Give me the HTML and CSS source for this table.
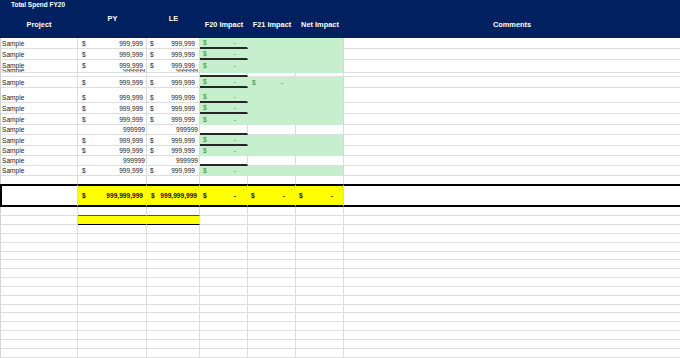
FILE: index.html
```html
<!DOCTYPE html>
<html>
<head>
<meta charset="utf-8">
<link rel="stylesheet" href="styles.css">
</head>
<body>
<div class="sheet">
  <div class="head">
    <div class="title">Total Spend FY20</div>
    <div class="hrow">
      <div class="h">Project</div>
      <div class="h top">PY</div>
      <div class="h top">LE</div>
      <div class="h">F20 Impact</div>
      <div class="h">F21 Impact</div>
      <div class="h">Net Impact</div>
      <div class="h">Comments</div>
    </div>
  </div>

  <div class="row h11">
    <div class="c name">Sample</div>
    <div class="c py"><span>$</span><span>999,999</span></div>
    <div class="c le"><span>$</span><span>999,999</span></div>
    <div class="c g f20 ul"><span>$</span><span>-</span></div>
    <div class="c g"></div>
    <div class="c g net"></div>
    <div class="c"></div>
  </div>
  <div class="row h11">
    <div class="c name">Sample</div>
    <div class="c py"><span>$</span><span>999,999</span></div>
    <div class="c le"><span>$</span><span>999,999</span></div>
    <div class="c g f20 ul"><span>$</span><span>-</span></div>
    <div class="c g"></div>
    <div class="c g net"></div>
    <div class="c"></div>
  </div>
  <div class="row h9 nob low">
    <div class="c name">Sample</div>
    <div class="c py"><span>$</span><span>999,999</span></div>
    <div class="c le"><span>$</span><span>999,999</span></div>
    <div class="c g f20"><span>$</span><span>-</span></div>
    <div class="c g"></div>
    <div class="c g net"></div>
    <div class="c"></div>
  </div>
  <div class="row h4 cut">
    <div class="c name">Sample</div>
    <div class="c plain">999999</div>
    <div class="c plain">999999</div>
    <div class="c g"></div>
    <div class="c g"></div>
    <div class="c g net"></div>
    <div class="c"></div>
  </div>
  <div class="row h4">
    <div class="c name"></div>
    <div class="c"></div>
    <div class="c"></div>
    <div class="c ul"></div>
    <div class="c"></div>
    <div class="c"></div>
    <div class="c"></div>
  </div>
  <div class="row h11">
    <div class="c name">Sample</div>
    <div class="c py"><span>$</span><span>999,999</span></div>
    <div class="c le"><span>$</span><span>999,999</span></div>
    <div class="c g f20 ul"><span>$</span><span>-</span></div>
    <div class="c g f21"><span>$</span><span>-</span></div>
    <div class="c g net"></div>
    <div class="c"></div>
  </div>
  <div class="row h15">
    <div class="c name">Sample</div>
    <div class="c py"><span>$</span><span>999,999</span></div>
    <div class="c le"><span>$</span><span>999,999</span></div>
    <div class="c g f20 ul"><span>$</span><span>-</span></div>
    <div class="c g"></div>
    <div class="c g net"></div>
    <div class="c"></div>
  </div>
  <div class="row h11">
    <div class="c name">Sample</div>
    <div class="c py"><span>$</span><span>999,999</span></div>
    <div class="c le"><span>$</span><span>999,999</span></div>
    <div class="c g f20 ul"><span>$</span><span>-</span></div>
    <div class="c g"></div>
    <div class="c g net"></div>
    <div class="c"></div>
  </div>
  <div class="row h11">
    <div class="c name">Sample</div>
    <div class="c py"><span>$</span><span>999,999</span></div>
    <div class="c le"><span>$</span><span>999,999</span></div>
    <div class="c g f20"><span>$</span><span>-</span></div>
    <div class="c g"></div>
    <div class="c g net"></div>
    <div class="c"></div>
  </div>
  <div class="row h10">
    <div class="c name">Sample</div>
    <div class="c plain">999999</div>
    <div class="c plain">999999</div>
    <div class="c ul"></div>
    <div class="c"></div>
    <div class="c"></div>
    <div class="c"></div>
  </div>
  <div class="row h11">
    <div class="c name">Sample</div>
    <div class="c py"><span>$</span><span>999,999</span></div>
    <div class="c le"><span>$</span><span>999,999</span></div>
    <div class="c g f20 ul"><span>$</span><span>-</span></div>
    <div class="c g"></div>
    <div class="c g net"></div>
    <div class="c"></div>
  </div>
  <div class="row h10">
    <div class="c name">Sample</div>
    <div class="c py"><span>$</span><span>999,999</span></div>
    <div class="c le"><span>$</span><span>999,999</span></div>
    <div class="c g f20"><span>$</span><span>-</span></div>
    <div class="c g"></div>
    <div class="c g net"></div>
    <div class="c"></div>
  </div>
  <div class="row h10">
    <div class="c name">Sample</div>
    <div class="c plain">999999</div>
    <div class="c plain">999999</div>
    <div class="c ul"></div>
    <div class="c"></div>
    <div class="c"></div>
    <div class="c"></div>
  </div>
  <div class="row h10">
    <div class="c name">Sample</div>
    <div class="c py"><span>$</span><span>999,999</span></div>
    <div class="c le"><span>$</span><span>999,999</span></div>
    <div class="c g f20"><span>$</span><span>-</span></div>
    <div class="c g"></div>
    <div class="c g net"></div>
    <div class="c"></div>
  </div>
  <div class="row h8 nob">
    <div class="c name"></div>
    <div class="c"></div>
    <div class="c"></div>
    <div class="c"></div>
    <div class="c"></div>
    <div class="c"></div>
    <div class="c"></div>
  </div>

  <div class="row total">
    <div class="c name"></div>
    <div class="c y py"><span>$</span><span>999,999,999</span></div>
    <div class="c y le tle"><span>$</span><span>999,999,999</span></div>
    <div class="c y f20"><span>$</span><span>-</span></div>
    <div class="c y tf21"><span>$</span><span>-</span></div>
    <div class="c y net tnet"><span>$</span><span>-</span></div>
    <div class="c"></div>
  </div>

  <div class="row h9">
    <div class="c name"></div>
    <div class="c dk"></div>
    <div class="c dk"></div>
    <div class="c"></div>
    <div class="c"></div>
    <div class="c"></div>
    <div class="c"></div>
  </div>
  <div class="row h9">
    <div class="c name"></div>
    <div class="c y yb"></div>
    <div class="c y yb"></div>
    <div class="c"></div>
    <div class="c"></div>
    <div class="c"></div>
    <div class="c"></div>
  </div>

  <div class="blank"><div class="c name"></div><div class="c"></div><div class="c"></div><div class="c"></div><div class="c"></div><div class="c"></div><div class="c"></div></div>
  <div class="blank"><div class="c name"></div><div class="c"></div><div class="c"></div><div class="c"></div><div class="c"></div><div class="c"></div><div class="c"></div></div>
  <div class="blank"><div class="c name"></div><div class="c"></div><div class="c"></div><div class="c"></div><div class="c"></div><div class="c"></div><div class="c"></div></div>
  <div class="blank"><div class="c name"></div><div class="c"></div><div class="c"></div><div class="c"></div><div class="c"></div><div class="c"></div><div class="c"></div></div>
  <div class="blank"><div class="c name"></div><div class="c"></div><div class="c"></div><div class="c"></div><div class="c"></div><div class="c"></div><div class="c"></div></div>
  <div class="blank"><div class="c name"></div><div class="c"></div><div class="c"></div><div class="c"></div><div class="c"></div><div class="c"></div><div class="c"></div></div>
  <div class="blank"><div class="c name"></div><div class="c"></div><div class="c"></div><div class="c"></div><div class="c"></div><div class="c"></div><div class="c"></div></div>
  <div class="blank"><div class="c name"></div><div class="c"></div><div class="c"></div><div class="c"></div><div class="c"></div><div class="c"></div><div class="c"></div></div>
  <div class="blank"><div class="c name"></div><div class="c"></div><div class="c"></div><div class="c"></div><div class="c"></div><div class="c"></div><div class="c"></div></div>
  <div class="blank"><div class="c name"></div><div class="c"></div><div class="c"></div><div class="c"></div><div class="c"></div><div class="c"></div><div class="c"></div></div>
  <div class="blank"><div class="c name"></div><div class="c"></div><div class="c"></div><div class="c"></div><div class="c"></div><div class="c"></div><div class="c"></div></div>
  <div class="blank"><div class="c name"></div><div class="c"></div><div class="c"></div><div class="c"></div><div class="c"></div><div class="c"></div><div class="c"></div></div>
  <div class="blank"><div class="c name"></div><div class="c"></div><div class="c"></div><div class="c"></div><div class="c"></div><div class="c"></div><div class="c"></div></div>
  <div class="blank"><div class="c name"></div><div class="c"></div><div class="c"></div><div class="c"></div><div class="c"></div><div class="c"></div><div class="c"></div></div>
  <div class="blank"><div class="c name"></div><div class="c"></div><div class="c"></div><div class="c"></div><div class="c"></div><div class="c"></div><div class="c"></div></div>
  <div class="blank"><div class="c name"></div><div class="c"></div><div class="c"></div><div class="c"></div><div class="c"></div><div class="c"></div><div class="c"></div></div>
</div>
</body>
</html>
```
FILE: styles.css
```css
html, body {
  margin: 0;
  padding: 0;
  background: #ffffff;
  overflow: hidden;
}
body {
  font-family: "Liberation Sans", Arial, sans-serif;
  width: 680px;
  height: 358px;
}
.sheet {
  width: 680px;
}
.head {
  background: #002060;
  height: 38px;
  box-sizing: border-box;
  border-bottom: 1px solid #1c1c2a;
  color: #ffffff;
  font-weight: bold;
}
.title {
  height: 10px;
  line-height: 10px;
  padding-left: 11px;
  font-size: 6.5px;
}
.hrow {
  display: grid;
  grid-template-columns: 78px 69px 53px 48px 48px 48px 336px;
  height: 27px;
}
.h {
  display: flex;
  justify-content: center;
  align-items: center;
  font-size: 7.4px;
  line-height: 9px;
  padding-top: 1px;
}
.h.top {
  align-items: flex-start;
  padding-top: 4px;
}

.row, .blank {
  display: grid;
  grid-template-columns: 78px 69px 53px 48px 48px 48px 336px;
}
.blank { height: 8.85px; }
.h4 { height: 4px; }
.h8 { height: 8px; }
.h9 { height: 9px; }
.h10 { height: 10px; }
.h11 { height: 11px; }
.h15 { height: 15px; }

.c {
  box-sizing: border-box;
  border-right: 1px solid #dcdcdc;
  border-bottom: 1px solid #dedede;
  overflow: hidden;
  display: flex;
  align-items: flex-end;
  font-size: 6.6px;
  line-height: 7px;
  padding-bottom: 1px;
  color: #1e1e1e;
  white-space: nowrap;
}
.nob .c { border-bottom: none; }
.low .c { padding-bottom: 0; }
.h4 .c { padding-bottom: 0; }
.cut .c { line-height: 3px; }
.name {
  border-left: 1px solid #cfcfcf;
  padding-left: 1px;
}
.py {
  justify-content: space-between;
  padding-left: 4px;
  padding-right: 3px;
}
.le {
  justify-content: space-between;
  padding-left: 3px;
  padding-right: 4px;
}
.plain {
  justify-content: flex-end;
  padding-right: 1px;
}
.g {
  background: #c6efce;
  border-right-color: #c6efce;
  border-bottom-color: #c6efce;
  color: #2b8f34;
}
.g.net { border-right-color: #d6d6d6; }
.f20 {
  justify-content: space-between;
  padding-left: 3px;
  padding-right: 11px;
}
.f21 {
  justify-content: space-between;
  padding-left: 4px;
  padding-right: 12px;
}
.ul { border-bottom: 2px solid #262626; }
.nob .ul { border-bottom: none; }

.total { height: 23px; }
.total .c {
  border-top: 2px solid #000;
  border-bottom: 2px solid #000;
  align-items: center;
  padding-bottom: 0;
  font-weight: bold;
  color: #111;
}
.total .name { border-left: 2px solid #000; }
.y {
  background: #ffff00;
  border-right-color: #ffff00;
}
.y.net { border-right-color: #d6d6d6; }
.tle { padding-left: 4px; padding-right: 2px; }
.tf21 { justify-content: space-between; padding-left: 3px; padding-right: 10px; }
.tnet { justify-content: space-between; padding-left: 3px; padding-right: 10px; }
.dk { border-bottom-color: #555; }
.yb { border-bottom: 1px solid #000; }
.blank .name { border-left-color: #d6d6d6; }
.c:last-child { border-right: none; }
```
